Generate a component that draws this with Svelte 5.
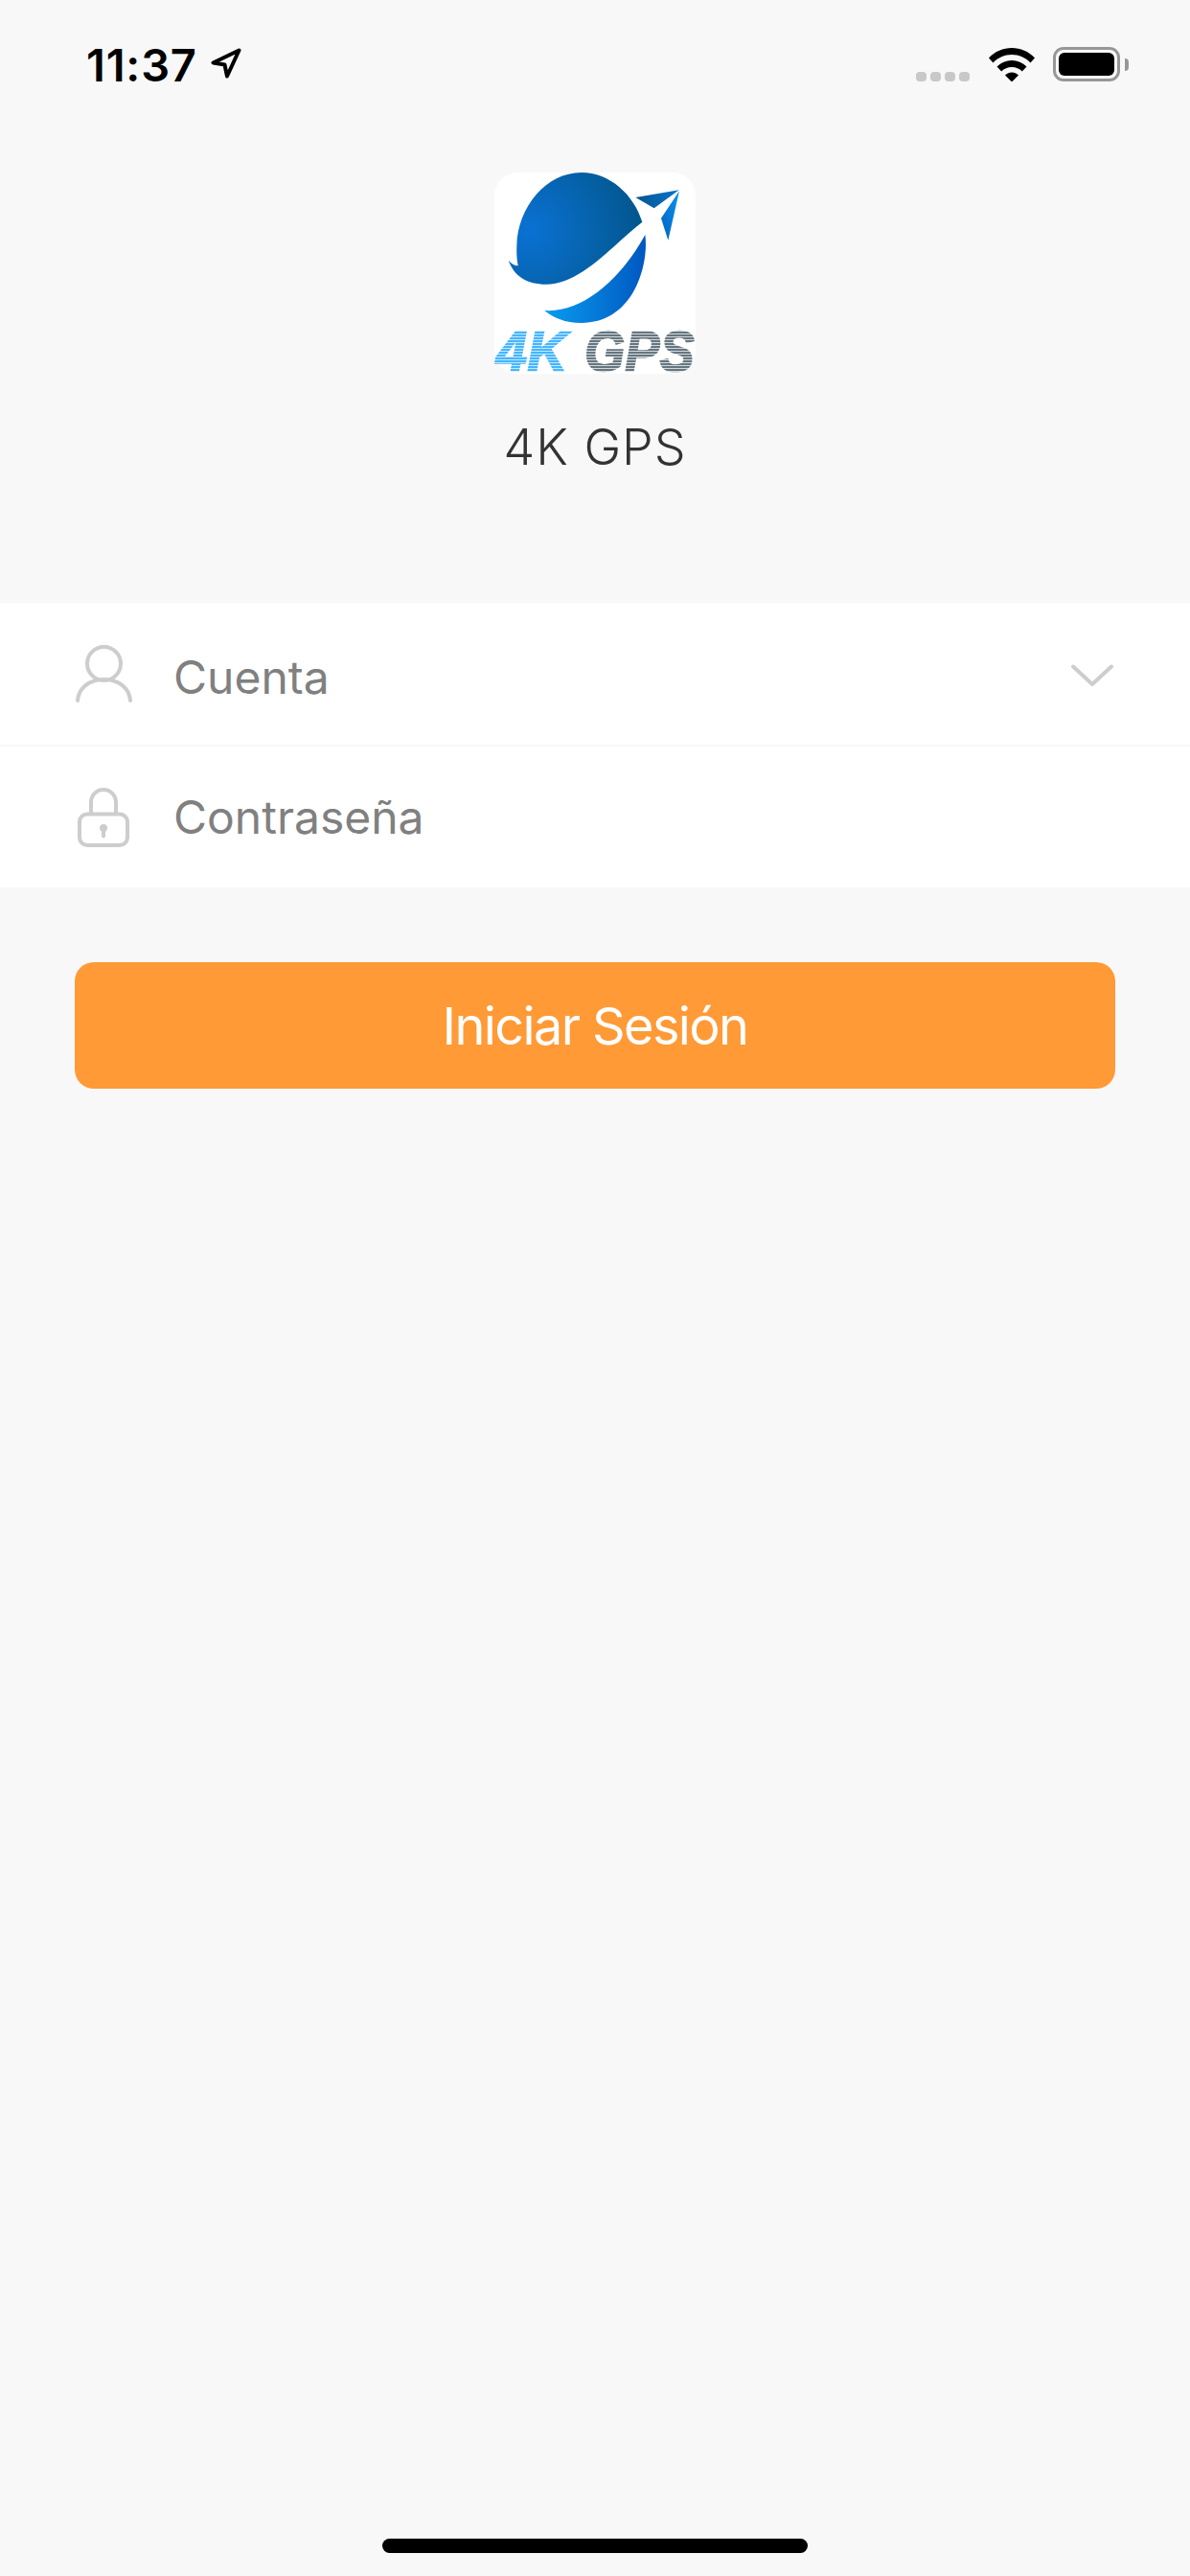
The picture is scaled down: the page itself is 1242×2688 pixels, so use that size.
<script>
  const fields = [
    { label: 'Cuenta', icon: 'user', dropdown: true },
    { label: 'Contraseña', icon: 'lock', dropdown: false }
  ];
</script>

<div class="page">
  <header class="status">
    <div class="clock">
      <span class="time">11:37</span>
      <svg class="arrow" width="32" height="32" viewBox="0 0 32 32">
        <path d="M29.500 2.500 2.500 15.500 14.500 17.500 17 29.500Z" fill="none" stroke="#000" stroke-width="4" stroke-linejoin="round" />
      </svg>
    </div>
    <div class="indicators">
      <div class="dots"><i></i><i></i><i></i><i></i></div>
      <svg class="wifi" width="48" height="36" viewBox="0 0 48 36">
        <path d="M0 11.500C6.500 4.500 15 1 24 1s17.500 3.500 24 10.500l-4.500 5C38.300 11 31.500 8 24 8S9.700 11 4.500 16.500Z" />
        <path d="M8.500 20.500C12.800 16.200 18 14 24 14s11.200 2.200 15.500 6.500l-4.700 5C32 22.500 28.300 21 24 21s-8 1.500-10.800 4.500Z" />
        <path d="M17 29.500C19 27.500 21.300 26.500 24 26.500s5 1 7 3L24 36.500Z" />
      </svg>
      <div class="battery"><div class="level"></div></div>
      <div class="cap"></div>
    </div>
  </header>

  <section class="brand">
    <div class="logo">
      <svg width="210" height="210" viewBox="78 60 630 630">
        <defs>
          <radialGradient id="globe" gradientUnits="userSpaceOnUse" cx="190" cy="240" r="340">
            <stop offset="0" stop-color="#0a72d4" />
            <stop offset="1" stop-color="#03578f" />
          </radialGradient>
          <linearGradient id="lower" x1="0" x2="1" y1="0" y2="0">
            <stop offset="0" stop-color="#0a9cf0" />
            <stop offset="1" stop-color="#0058c0" />
          </linearGradient>
          <linearGradient id="wing" x1="0" x2="1" y1="0" y2="0">
            <stop offset="0" stop-color="#04558f" />
            <stop offset="1" stop-color="#0a74cc" />
          </linearGradient>
          <linearGradient id="fin" x1="0" x2="1" y1="1" y2="0">
            <stop offset="0" stop-color="#0062c4" />
            <stop offset="1" stop-color="#0a96ec" />
          </linearGradient>
          <pattern id="blue-lines" patternUnits="userSpaceOnUse" width="10" height="9">
            <rect width="10" height="9" fill="#c4e8ff" />
            <rect width="10" height="6" fill="#45b6fc" />
          </pattern>
          <pattern id="grey-lines" patternUnits="userSpaceOnUse" width="10" height="9">
            <rect width="10" height="9" fill="#d4d9dd" />
            <rect width="10" height="6" fill="#66767f" />
          </pattern>
        </defs>
        <path d="M122 335C132 347 142 351 152 352C148 330 147 310 148 290C150 170 240 60 350 60C440 60 515 130 541 215C450 285 350 410 240 410C180 410 140 385 122 335Z" fill="url(#globe)" />
        <path d="M550 255C562 340 520 531 350 531C300 531 262 515 235 492C350 500 470 400 550 255Z" fill="url(#lower)" />
        <path d="M656 115 520 138 578 172Z" fill="url(#wing)" />
        <path d="M657 118 600 203 622 272Z" fill="url(#fin)" />
        <text class="logo-text" x="83" y="680" font-size="180" textLength="224" lengthAdjust="spacingAndGlyphs" fill="url(#blue-lines)" stroke="url(#blue-lines)" stroke-width="5">4K</text>
        <text class="logo-text" x="360" y="680" font-size="180" textLength="344" lengthAdjust="spacingAndGlyphs" fill="url(#grey-lines)" stroke="url(#grey-lines)" stroke-width="5">GPS</text>
      </svg>
    </div>
    <h1>4K GPS</h1>
  </section>

  <form class="fields">
    {#each fields as field}
      <div class="field">
        {#if field.icon === 'user'}
          <svg class="icon" width="60" height="60" viewBox="0 0 60 60">
            <circle cx="30.500" cy="19.500" r="17.500" />
            <path d="M3 58C4 45 15 36 30.500 36s26.500 9 27.500 22" stroke-linecap="round" />
          </svg>
        {:else}
          <svg class="icon" width="60" height="64" viewBox="0 0 60 64">
            <rect x="5" y="28.500" width="50" height="32.500" rx="8" />
            <path d="M17 28.500V16a13 13 0 0 1 26 0V28.500" />
            <circle class="keyhole" cx="30" cy="43" r="4" />
            <path class="keyline" d="M30 44V51.500" stroke-linecap="round" />
          </svg>
        {/if}
        <span class="label">{field.label}</span>
        {#if field.dropdown}
          <svg class="chevron" width="44" height="24" viewBox="0 0 44 24">
            <path d="M2 2.500 22 21 42 2.500" stroke-linecap="round" stroke-linejoin="round" />
          </svg>
        {/if}
      </div>
    {/each}
  </form>

  <button class="login" type="button">Iniciar Sesión</button>

  <div class="home"></div>
</div>

<style>
  :global(body) {
    margin: 0;
    background: #f8f8f8;
  }

  .page {
    display: flex;
    flex-direction: column;
    height: 2688px;
    background: #f8f8f8;
    font-family: Inter, "Liberation Sans", sans-serif;
    overflow: hidden;
  }

  .status {
    display: flex;
    justify-content: space-between;
    align-items: flex-start;
    height: 180px;
    padding: 49px 64px 0 90px;
    box-sizing: border-box;
  }

  .clock {
    display: flex;
    align-items: flex-start;
    gap: 14px;
  }

  .time {
    font-size: 47px;
    line-height: 38px;
    font-weight: 600;
    letter-spacing: 0.8px;
    color: #000;
  }

  .arrow {
    margin-top: 1px;
  }

  .indicators {
    display: flex;
    align-items: flex-start;
  }

  .dots {
    display: flex;
    gap: 4px;
    margin: 26px 20px 0 0;
  }

  .dots i {
    width: 11px;
    height: 10px;
    border-radius: 4px;
    background: #c8c8c8;
  }

  .wifi {
    margin-right: 19px;
    fill: #000;
  }

  .battery {
    width: 70px;
    height: 36px;
    box-sizing: border-box;
    padding: 3px;
    border: 3px solid #979797;
    border-radius: 11px;
  }

  .level {
    height: 100%;
    background: #000;
    border-radius: 6px;
  }

  .cap {
    width: 4px;
    height: 13px;
    margin: 12px 0 0 5px;
    background: #979797;
    border-radius: 0 6px 6px 0;
  }

  .brand {
    display: flex;
    flex-direction: column;
    align-items: center;
    height: 449px;
  }

  .logo {
    width: 210px;
    height: 210px;
    background: #fff;
    border-radius: 24px;
  }

  .logo svg {
    display: block;
    overflow: visible;
  }

  .logo-text {
    font-family: "Liberation Sans", sans-serif;
    font-style: italic;
    font-weight: 700;
  }

  h1 {
    margin: 46px 0 0;
    font-size: 52px;
    line-height: 62px;
    font-weight: 300;
    letter-spacing: 1px;
    color: #333;
  }

  .fields {
    display: flex;
    flex-direction: column;
    gap: 2px;
  }

  .field {
    display: flex;
    align-items: center;
    height: 147px;
    padding: 0 80px 0 78px;
    background: #fff;
  }

  .field:first-child {
    height: 148px;
  }

  .field:first-child .label {
    margin-top: 8px;
  }

  .icon {
    flex: none;
    fill: none;
    stroke: #cdcdcd;
    stroke-width: 4px;
  }

  .icon .keyhole {
    fill: #cdcdcd;
    stroke: none;
  }

  .label {
    flex: 1;
    margin-left: 43px;
    font-size: 48px;
    line-height: 58px;
    color: #808080;
  }

  .chevron {
    flex: none;
    margin-top: 3px;
    fill: none;
    stroke: #cdcdcd;
    stroke-width: 4px;
  }

  .login {
    align-self: center;
    width: 1086px;
    height: 132px;
    margin-top: 78px;
    padding: 0;
    border: 0;
    border-radius: 20px;
    background: #ff9a36;
    color: #fff;
    font-family: inherit;
    font-size: 54px;
    font-weight: 400;
    letter-spacing: -1.6px;
  }

  .home {
    align-self: center;
    width: 444px;
    height: 15px;
    margin-top: auto;
    margin-bottom: 24px;
    border-radius: 8px;
    background: #000;
  }
</style>
